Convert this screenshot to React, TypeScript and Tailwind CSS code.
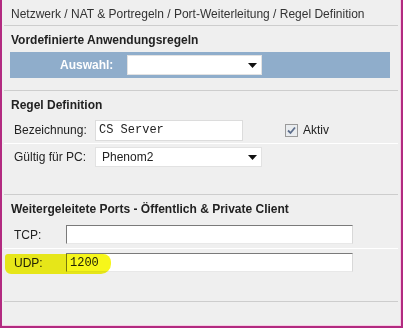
import React from 'react';

const font = { fontFamily: '"Liberation Sans", Arial, sans-serif' };
const mono = { fontFamily: '"Liberation Mono", "Courier New", monospace' };

function Arrow() {
  return (
    <svg width="9" height="5" viewBox="0 0 9 5" className="shrink-0">
      <path d="M0 0h9L4.5 5z" fill="#111" />
    </svg>
  );
}

function Select({ value, width }: { value?: string; width: string }) {
  return (
    <div
      className={`${width} h-[20px] bg-white border border-[#e2e2e2] flex items-center justify-between pl-[6px] pr-[4px] text-[12px] text-[#222]`}
    >
      <span>{value}</span>
      <Arrow />
    </div>
  );
}

function PortInput({ value }: { value?: string }) {
  return (
    <div
      style={mono}
      className="w-[287px] h-[19px] bg-white border border-t-[#7a7a7a] border-l-[#7a7a7a] border-r-[#d8d8d8] border-b-[#e8e8e8] flex items-center pl-[3px] text-[12px] text-[#222]"
    >
      {value}
    </div>
  );
}

export default function App() {
  return (
    <div
      style={font}
      className="w-[403px] h-[328px] bg-[#b22a80] pl-[2px] pr-[2px] pb-[2px]"
    >
      <div className="h-full bg-[#efefef] border-r border-b border-[#f6cde4] flex flex-col text-[#222] text-[12px] leading-[14px]">
        {/* Breadcrumb */}
        <div className="h-[26px] flex items-center pl-[7px] pt-[2px] border-b border-[#cdcdcd] mx-[2px] text-[#333]">
          Netzwerk / NAT &amp; Portregeln / Port-Weiterleitung / Regel Definition
        </div>

        {/* Vordefinierte Anwendungsregeln */}
        <div className="pl-[6px] pr-[8px] pt-[7px] pb-[12px] border-b border-[#cdcdcd] mx-[2px]">
          <div className="font-bold h-[14px] pl-[1px]">Vordefinierte Anwendungsregeln</div>
          <div className="mt-[5px] h-[26px] bg-[#8fadcb] flex items-center">
            <span className="ml-[50px] w-[67px] font-bold text-white">Auswahl:</span>
            <Select width="w-[135px]" />
          </div>
        </div>

        {/* Regel Definition */}
        <div className="pt-[7px] mx-[2px]">
          <div className="font-bold h-[14px] pl-[7px]">Regel Definition</div>
          <div className="h-[32px] flex items-center pl-[10px] pt-[5px] border-b border-white">
            <span className="w-[81px]">Bezeichnung:</span>
            <div
              style={mono}
              className="w-[148px] h-[21px] bg-white border border-[#dcdcdc] flex items-center pl-[3px] text-[12px]"
            >
              CS Server
            </div>
            <div className="ml-[42px] w-[13px] h-[13px] border border-[#9a9a9a] bg-[#e9ecef] flex items-center justify-center">
              <svg width="9" height="9" viewBox="0 0 9 9">
                <path d="M1 4.5l2.5 2.5L8 1.5" stroke="#5d6e8c" strokeWidth="1.8" fill="none" />
              </svg>
            </div>
            <span className="ml-[5px]">Aktiv</span>
          </div>
          <div className="h-[23px] flex items-end pl-[10px]">
            <span className="w-[81px] h-[20px] flex items-center">Gültig für PC:</span>
            <Select value="Phenom2" width="w-[167px]" />
          </div>
        </div>

        <div className="mt-[27px] mx-[2px] border-b border-[#cdcdcd]" />

        {/* Weitergeleitete Ports */}
        <div className="pt-[7px] mx-[2px] relative">
          <div className="font-bold h-[14px] pl-[7px]">
            Weitergeleitete Ports - Öffentlich &amp; Private Client
          </div>
          <div className="h-[33px] flex items-center pl-[10px] pt-[9px] pb-[4px] border-b border-white">
            <span className="w-[52px]">TCP:</span>
            <PortInput />
          </div>
          <div className="h-[23px] flex items-end pl-[10px]">
            <span className="w-[52px] h-[19px] flex items-center">UDP:</span>
            <PortInput value="1200" />
          </div>
          {/* Highlighter */}
          <div className="absolute left-[1px] top-[59px] w-[106px] h-[20px] bg-[#f6f61a] mix-blend-multiply rounded-tl-[3px] rounded-bl-[6px] rounded-tr-[8px] rounded-br-[10px]" />
        </div>

        <div className="mt-[29px] mx-[2px] border-b border-[#cdcdcd]" />
      </div>
    </div>
  );
}
